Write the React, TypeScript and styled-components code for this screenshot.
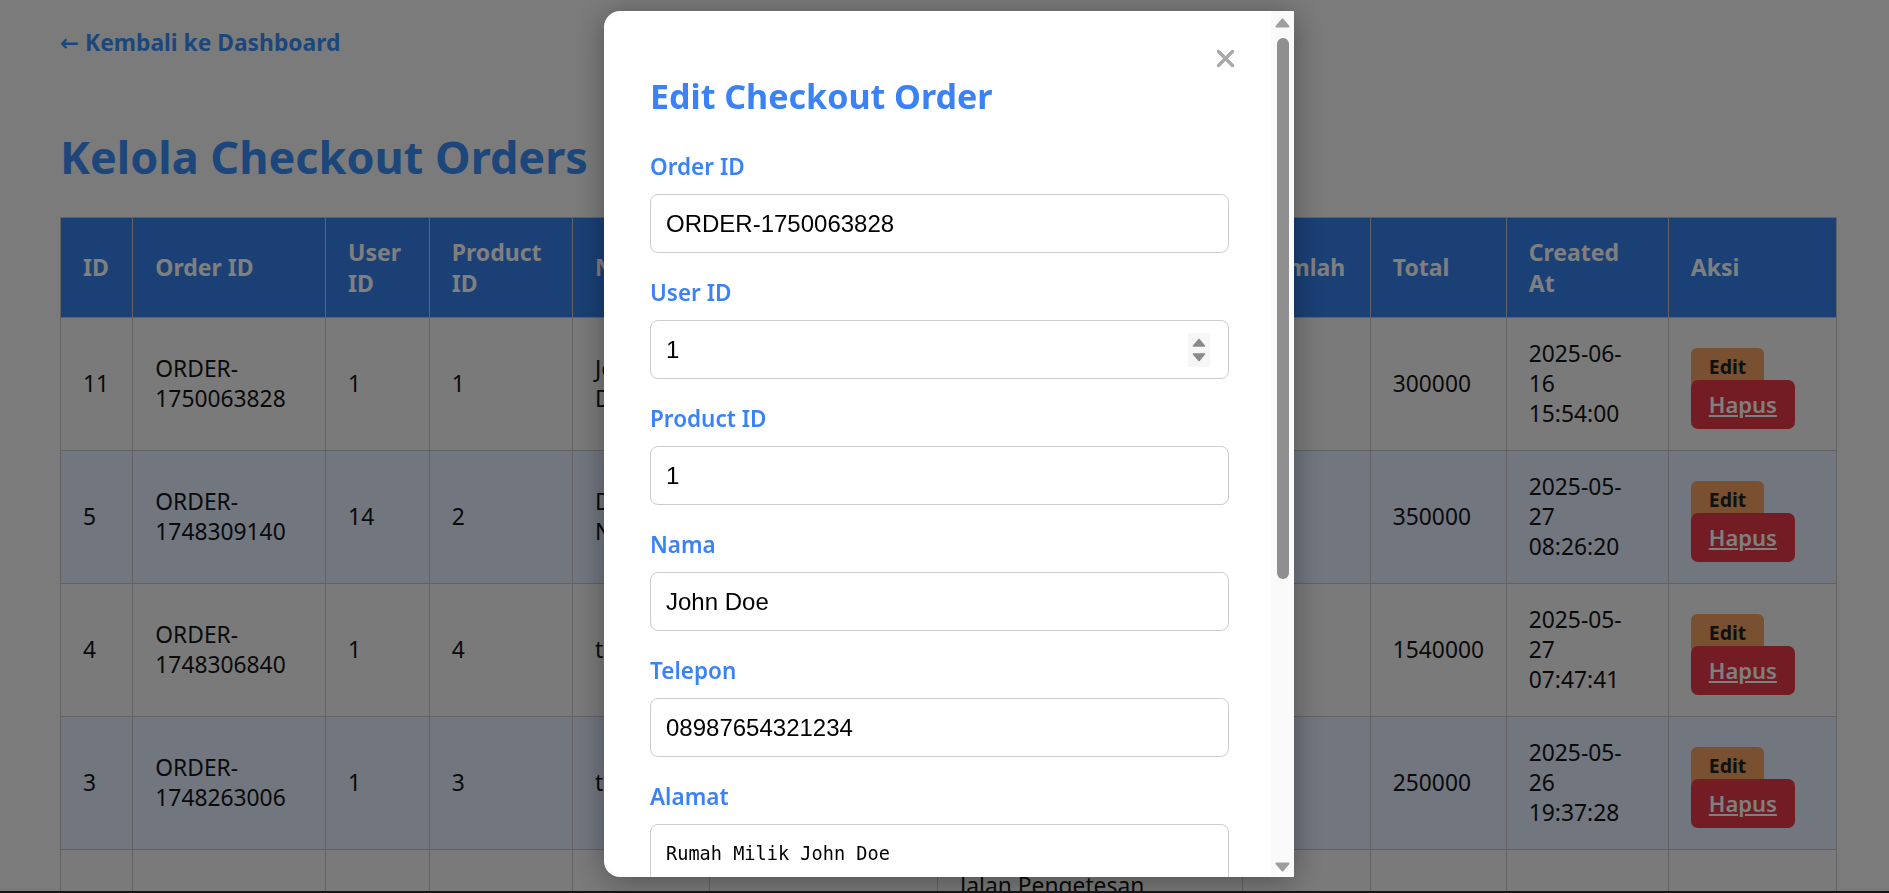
import React from "react";
import styled, { createGlobalStyle } from "styled-components";

const GlobalStyle = createGlobalStyle`
  *, *::before, *::after { box-sizing: border-box; }
  html, body { margin: 0; padding: 0; }
  body {
    background: #f7f7f7;
    font-family: "Noto Sans", "Open Sans", "DejaVu Sans", sans-serif;
    color: #222;
    overflow: hidden;
  }
`;

const Page = styled.main`
  padding: 28px 53px 0 60px;
`;

const BackLink = styled.a`
  display: block;
  width: fit-content;
  font-size: 22.8px;
  line-height: 30px;
  font-weight: 700;
  color: #3b8ff6;
  text-decoration: none;
`;

const PageTitle = styled.h1`
  margin: 69px 0 30px;
  font-size: 45px;
  line-height: 60px;
  font-weight: 700;
  color: #3b8ff6;
`;

const Table = styled.table`
  width: 1776px;
  border-collapse: collapse;
  table-layout: fixed;
`;

const HeadCell = styled.th<{ $padRight?: number }>`
  background: #3480ec;
  color: #fff;
  font-size: 23px;
  line-height: 31px;
  font-weight: 700;
  text-align: left;
  padding: 18.5px ${(p) => p.$padRight ?? 22}px 18.5px 22px;
  border: 1px solid #c4c4c4;
  vertical-align: middle;
`;

const Row = styled.tr<{ $alt: boolean }>`
  background: ${(p) => (p.$alt ? "#e2ecfe" : "#f5f5f5")};
`;

const Cell = styled.td<{ $padRight?: number }>`
  padding: 21px ${(p) => p.$padRight ?? 22}px 21px 22px;
  font-size: 22.8px;
  line-height: 30px;
  color: #141414;
  border: 1px solid #c4c4c4;
  vertical-align: middle;
`;

const ActionStack = styled.div`
  display: flex;
  flex-direction: column;
  align-items: flex-start;
  padding-top: 8.5px;
`;

const EditButton = styled.button`
  font-family: inherit;
  font-size: 19.5px;
  font-weight: 700;
  line-height: 24px;
  color: #222;
  background: #f4a261;
  border: none;
  border-radius: 6px;
  padding: 7px 18px 9px;
  cursor: pointer;
`;

const DeleteButton = styled.a`
  display: block;
  margin-top: -8px;
  font-size: 22px;
  font-weight: 600;
  line-height: 30px;
  color: #fff;
  background: #e63946;
  border-radius: 7px;
  padding: 9.75px 18px;
  text-decoration: underline;
`;

const Overlay = styled.div`
  position: fixed;
  inset: 0;
  background: rgba(0, 0, 0, 0.5);
  display: flex;
  justify-content: center;
  align-items: flex-start;
  padding: 11px 0 0 9px;
`;

const Modal = styled.div`
  position: relative;
  width: 690px;
  height: 866px;
  background: #fff;
  border-radius: 16px 0 0 16px;
  box-shadow: 0 4px 30px rgba(0, 0, 0, 0.35);
  display: flex;
  overflow: hidden;
`;

const ModalBody = styled.div`
  flex: 1;
  min-width: 0;
  overflow: hidden;
  padding: 65px 42px 0 46px;
`;

const CloseButton = styled.button`
  position: absolute;
  top: 38px;
  right: 59px;
  width: 19px;
  height: 19px;
  padding: 0;
  border: none;
  background: none;
  display: flex;
  cursor: pointer;
`;

const ModalTitle = styled.h2`
  margin: 0 0 36px;
  font-size: 34px;
  line-height: 40px;
  font-weight: 700;
  color: #3b82f6;
`;

const FormGroup = styled.div`
  margin-bottom: 25px;
`;

const Label = styled.label`
  display: block;
  margin-bottom: 12px;
  font-size: 22.5px;
  line-height: 30px;
  font-weight: 600;
  color: #3b82f6;
`;

const FieldWrap = styled.div`
  position: relative;
`;

const TextInput = styled.input`
  display: block;
  width: 100%;
  height: 59px;
  padding: 0 15px;
  border: 1px solid #cccccc;
  border-radius: 8px;
  font-family: "Liberation Sans", Arial, sans-serif;
  font-size: 24px;
  color: #000;
  background: #fff;
  outline: none;
  -moz-appearance: textfield;
  &::-webkit-outer-spin-button,
  &::-webkit-inner-spin-button {
    -webkit-appearance: none;
    margin: 0;
  }
`;

const Spinner = styled.svg`
  position: absolute;
  right: 19px;
  top: 50%;
  transform: translateY(-50%);
`;

const TextArea = styled.textarea`
  display: block;
  width: 100%;
  height: 120px;
  padding: 15px;
  border: 1px solid #cccccc;
  border-radius: 8px;
  font-family: "DejaVu Sans Mono", "Liberation Mono", monospace;
  font-size: 18.6px;
  line-height: 28px;
  color: #000;
  resize: none;
  outline: none;
`;

const ScrollTrack = styled.div`
  width: 23px;
  flex: none;
  background: #fafafa;
  display: flex;
  flex-direction: column;
  align-items: center;
  padding: 7px 0 5px;
`;

const ScrollThumb = styled.div`
  width: 12px;
  height: 541px;
  margin-top: 10px;
  border-radius: 6px;
  background: #8f8f8f;
`;

const ScrollSpacer = styled.div`
  flex: 1;
`;

const WindowEdge = styled.div`
  position: fixed;
  left: 0;
  right: 0;
  bottom: 0;
  height: 2px;
  background: #151515;
`;

type Order = {
  id: number;
  orderId: string;
  userId: number;
  productId: number;
  nama: string;
  telepon: string;
  alamat: string;
  jumlah: number;
  total: number;
  createdAt: string;
};

const orders: Order[] = [
  { id: 11, orderId: "ORDER-1750063828", userId: 1, productId: 1, nama: "John Doe", telepon: "08987654321234", alamat: "Rumah Milik John Doe", jumlah: 1, total: 300000, createdAt: "2025-06-16 15:54:00" },
  { id: 5, orderId: "ORDER-1748309140", userId: 14, productId: 2, nama: "Dimas Nugroho", telepon: "081234567890", alamat: "Jl. Merdeka No. 10", jumlah: 1, total: 350000, createdAt: "2025-05-27 08:26:20" },
  { id: 4, orderId: "ORDER-1748306840", userId: 1, productId: 4, nama: "test", telepon: "0812345678", alamat: "test", jumlah: 2, total: 1540000, createdAt: "2025-05-27 07:47:41" },
  { id: 3, orderId: "ORDER-1748263006", userId: 1, productId: 3, nama: "test", telepon: "0812345678", alamat: "test", jumlah: 1, total: 250000, createdAt: "2025-05-26 19:37:28" },
  { id: 2, orderId: "ORDER-1748261234", userId: 1, productId: 2, nama: "test", telepon: "08123456789", alamat: "Jalan Pengetesan Kelurahan Sukamaju, Kecamatan Cibeunying, Kota Bandung, Jawa Barat", jumlah: 1, total: 150000, createdAt: "2025-05-26 19:00:12" },
];

const columns: { label: string; width: number; padRight?: number }[] = [
  { label: "ID", width: 72.3 },
  { label: "Order ID", width: 192.8 },
  { label: "User ID", width: 103.6 },
  { label: "Product ID", width: 143.3 },
  { label: "Nama", width: 137.4, padRight: 30 },
  { label: "Telepon", width: 227.7 },
  { label: "Alamat", width: 304.7 },
  { label: "Jumlah", width: 128 },
  { label: "Total", width: 136 },
  { label: "Created At", width: 162, padRight: 34 },
  { label: "Aksi", width: 168 },
];

const ArrowUp = () => (
  <svg width="15" height="10" viewBox="0 0 15 10">
    <polygon points="7.5,1.5 13.5,8.5 1.5,8.5" fill="#9e9e9e" stroke="#9e9e9e" strokeWidth="2" strokeLinejoin="round" />
  </svg>
);

const ArrowDown = () => (
  <svg width="15" height="10" viewBox="0 0 15 10">
    <polygon points="1.5,1.5 13.5,1.5 7.5,8.5" fill="#9e9e9e" stroke="#9e9e9e" strokeWidth="2" strokeLinejoin="round" />
  </svg>
);

export default function App() {
  return (
    <>
      <GlobalStyle />
      <Page>
        <BackLink href="#">← Kembali ke Dashboard</BackLink>
        <PageTitle>Kelola Checkout Orders</PageTitle>
        <Table>
          <colgroup>
            {columns.map((c) => (
              <col key={c.label} style={{ width: c.width }} />
            ))}
          </colgroup>
          <thead>
            <tr>
              {columns.map((c) => (
                <HeadCell key={c.label} $padRight={c.padRight}>
                  {c.label}
                </HeadCell>
              ))}
            </tr>
          </thead>
          <tbody>
            {orders.map((o, i) => (
              <Row key={o.id} $alt={i % 2 === 1}>
                <Cell>{o.id}</Cell>
                <Cell>{o.orderId}</Cell>
                <Cell>{o.userId}</Cell>
                <Cell>{o.productId}</Cell>
                <Cell $padRight={30}>{o.nama}</Cell>
                <Cell>{o.telepon}</Cell>
                <Cell>{o.alamat}</Cell>
                <Cell>{o.jumlah}</Cell>
                <Cell>{o.total}</Cell>
                <Cell $padRight={34}>{o.createdAt}</Cell>
                <Cell>
                  <ActionStack>
                    <EditButton type="button">Edit</EditButton>
                    <DeleteButton href="#">Hapus</DeleteButton>
                  </ActionStack>
                </Cell>
              </Row>
            ))}
          </tbody>
        </Table>
      </Page>

      <Overlay>
        <Modal>
          <ModalBody>
            <CloseButton type="button" aria-label="Tutup">
              <svg width="19" height="19" viewBox="0 0 19 19">
                <path d="M2.5 2.5 L16.5 16.5 M16.5 2.5 L2.5 16.5" stroke="#a8a8a8" strokeWidth="3.4" strokeLinecap="round" />
              </svg>
            </CloseButton>
            <ModalTitle>Edit Checkout Order</ModalTitle>
            <FormGroup>
              <Label>Order ID</Label>
              <TextInput type="text" defaultValue="ORDER-1750063828" />
            </FormGroup>
            <FormGroup>
              <Label>User ID</Label>
              <FieldWrap>
                <TextInput type="number" defaultValue={1} />
                <Spinner width="22" height="34" viewBox="0 0 22 34">
                  <rect x="0" y="0" width="22" height="34" fill="#f6f6f6" />
                  <polygon points="11,6.5 16.5,13 5.5,13" fill="#8a8a8a" stroke="#8a8a8a" strokeWidth="1.6" strokeLinejoin="round" />
                  <polygon points="5.5,21 16.5,21 11,27.5" fill="#8a8a8a" stroke="#8a8a8a" strokeWidth="1.6" strokeLinejoin="round" />
                </Spinner>
              </FieldWrap>
            </FormGroup>
            <FormGroup>
              <Label>Product ID</Label>
              <TextInput type="text" defaultValue="1" />
            </FormGroup>
            <FormGroup>
              <Label>Nama</Label>
              <TextInput type="text" defaultValue="John Doe" />
            </FormGroup>
            <FormGroup>
              <Label>Telepon</Label>
              <TextInput type="text" defaultValue="08987654321234" />
            </FormGroup>
            <FormGroup>
              <Label>Alamat</Label>
              <TextArea defaultValue={"Rumah Milik John Doe"} />
            </FormGroup>
          </ModalBody>
          <ScrollTrack>
            <ArrowUp />
            <ScrollThumb />
            <ScrollSpacer />
            <ArrowDown />
          </ScrollTrack>
        </Modal>
      </Overlay>
      <WindowEdge />
    </>
  );
}
